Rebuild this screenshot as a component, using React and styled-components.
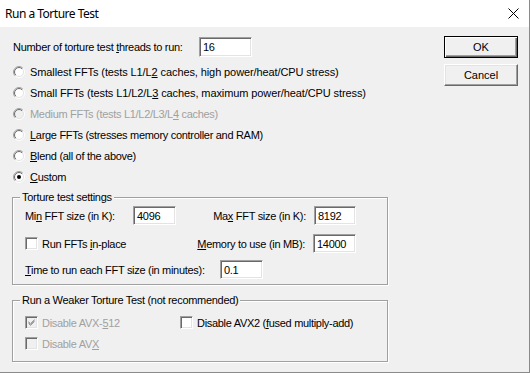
import React from 'react';
import styled, { createGlobalStyle } from 'styled-components';

const Global = createGlobalStyle`
  html, body { margin: 0; padding: 0; background: #f0f0f0; }
  body { font-family: "Liberation Sans", Arial, sans-serif; }
`;

const Window = styled.div`
  position: relative;
  width: 530px;
  height: 373px;
  box-sizing: border-box;
  background: #f0f0f0;
  border-right: 1px solid #8a8a8a;
  border-bottom: 1px solid #8a8a8a;
  display: flex;
  flex-direction: column;
  font-family: "Liberation Sans", Arial, sans-serif;
  font-size: 11px;
  letter-spacing: -0.3px;
  color: #000;
`;

const TitleBar = styled.div`
  height: 27px;
  flex: none;
  background: #fff;
  display: flex;
  align-items: center;
  justify-content: space-between;
  padding: 0 10px 0 5px;
`;

const Title = styled.span`
  font-family: "Noto Sans", sans-serif;
  font-size: 12px;
  letter-spacing: -0.5px;
`;

const Body = styled.div`
  display: flex;
  flex: 1;
  padding: 9px 11px 0 12px;
`;

const Main = styled.div`
  width: 376px;
  display: flex;
  flex-direction: column;
`;

const Side = styled.div`
  margin-left: auto;
  width: 74px;
  display: flex;
  flex-direction: column;
  gap: 6px;
`;

const Button = styled.button`
  height: 22px;
  box-sizing: border-box;
  background: #f0f0f0;
  font: inherit;
  color: #000;
  padding: 0;
  border: 1px solid;
  border-color: ${p => (p.$default ? '#000' : '#fff #696969 #696969 #fff')};
  box-shadow: ${p =>
    p.$default
      ? 'inset 1px 1px 0 #fff, inset -1px -1px 0 #696969, inset -2px -2px 0 #a0a0a0'
      : 'inset -1px -1px 0 #a0a0a0, inset 1px 1px 0 #e3e3e3'};
`;

const ThreadsRow = styled.div`
  display: flex;
  align-items: center;
  height: 20px;
  margin-top: 1px;
  padding-left: 1px;
`;

const Label = styled.span`
  width: ${p => (p.$w ? `${p.$w}px` : 'auto')};
  text-align: ${p => (p.$right ? 'right' : 'left')};
  white-space: nowrap;
  color: ${p => (p.$disabled ? '#a0a0a0' : '#000')};
  letter-spacing: ${p => (p.$wide ? '-0.1px' : 'inherit')};
  flex: none;
`;

const Key = styled.span`
  text-decoration: underline;
`;

const Field = styled.div`
  width: ${p => p.$w}px;
  height: ${p => p.$h || 19}px;
  box-sizing: border-box;
  background: #fff;
  border: 1px solid;
  border-color: #a0a0a0 #fff #fff #a0a0a0;
  box-shadow: inset 1px 1px 0 #696969, inset -1px -1px 0 #e3e3e3;
  display: flex;
  align-items: center;
  padding-left: 3px;
  flex: none;
`;

const RadioList = styled.div`
  display: flex;
  flex-direction: column;
  margin-top: 4px;
`;

const RadioRow = styled.div`
  display: flex;
  align-items: center;
  height: 21px;
  padding-left: 1px;
  gap: 5px;
`;

const Group = styled.div`
  position: relative;
  box-sizing: border-box;
  height: ${p => p.$h}px;
  margin-top: ${p => p.$mt}px;
  border: 1px solid #a0a0a0;
  box-shadow: inset 1px 1px 0 #fff, 1px 1px 0 #fff;
  padding: ${p => p.$pt}px 31px 0 12px;
  display: flex;
  flex-direction: column;
`;

const Legend = styled.span`
  position: absolute;
  top: -7px;
  left: 7px;
  padding: 0 2px;
  line-height: 13px;
  background: #f0f0f0;
`;

const SettingRow = styled.div`
  display: flex;
  align-items: center;
  height: 19px;
  margin-top: ${p => p.$mt || 0}px;
`;

const Right = styled.div`
  margin-left: auto;
  display: flex;
  align-items: center;
  gap: 8px;
`;

const CheckRow = styled.div`
  display: flex;
  align-items: center;
  height: 21px;
`;

const CheckItem = styled.label`
  display: flex;
  align-items: center;
  gap: 4px;
  width: ${p => (p.$w ? `${p.$w}px` : 'auto')};
  flex: none;
`;

const Box = styled.span`
  width: 13px;
  height: 13px;
  box-sizing: border-box;
  flex: none;
  background: ${p => (p.$disabled ? '#f0f0f0' : '#fff')};
  border: 1px solid;
  border-color: #a0a0a0 #fff #fff #a0a0a0;
  box-shadow: inset 1px 1px 0 #696969, inset -1px -1px 0 #e3e3e3;
  display: flex;
  align-items: center;
  justify-content: center;
`;

const Radio = ({ checked, disabled }) => (
  <svg width="12" height="12" viewBox="0 0 12 12" style={{ flex: 'none' }}>
    <defs>
      <linearGradient id="ro" x1="0" y1="0" x2="1" y2="1">
        <stop offset="0.45" stopColor="#a0a0a0" />
        <stop offset="0.55" stopColor="#ffffff" />
      </linearGradient>
      <linearGradient id="ri" x1="0" y1="0" x2="1" y2="1">
        <stop offset="0.45" stopColor="#696969" />
        <stop offset="0.55" stopColor="#e3e3e3" />
      </linearGradient>
    </defs>
    <circle cx="6" cy="6" r="5.5" fill="none" stroke="url(#ro)" strokeWidth="1" />
    <circle cx="6" cy="6" r="4.5" fill={disabled ? '#f0f0f0' : '#fff'} stroke="url(#ri)" strokeWidth="1" />
    {checked && <circle cx="6" cy="6" r="2" fill="#000" />}
  </svg>
);

const Check = ({ color }) => (
  <svg width="7" height="7" viewBox="0 0 7 7">
    <path d="M0.5 2.5 L2.5 4.5 L6.5 0.5 M0.5 3.5 L2.5 5.5 L6.5 1.5 M0.5 4.5 L2.5 6.5 L6.5 2.5" stroke={color} strokeWidth="1" fill="none" />
  </svg>
);

const Close = () => (
  <svg width="11" height="11" viewBox="0 0 11 11">
    <path d="M0.5 0.5 L10.5 10.5 M10.5 0.5 L0.5 10.5" stroke="#000" strokeWidth="1" />
  </svg>
);

const radios = [
  { k: 'r1', wide: true, content: <>Smallest FFTs (tests L1/L<Key>2</Key> caches, high power/heat/CPU stress)</> },
  { k: 'r2', wide: true, content: <>Small FFTs (tests L1/L2/L<Key>3</Key> caches, maximum power/heat/CPU stress)</> },
  { k: 'r3', disabled: true, content: <>Medium FFTs (tests L1/L2/L3/L<Key>4</Key> caches)</> },
  { k: 'r4', content: <><Key>L</Key>arge FFTs (stresses memory controller and RAM)</> },
  { k: 'r5', content: <><Key>B</Key>lend (all of the above)</> },
  { k: 'r6', checked: true, content: <><Key>C</Key>ustom</> },
];

export default function App() {
  return (
    <>
      <Global />
      <Window>
        <TitleBar>
          <Title>Run a Torture Test</Title>
          <Close />
        </TitleBar>
        <Body>
          <Main>
            <ThreadsRow>
              <Label $w={186}>Number of torture test <Key>t</Key>hreads to run:</Label>
              <Field $w={53} $h={20}>16</Field>
            </ThreadsRow>
            <RadioList>
              {radios.map(r => (
                <RadioRow key={r.k}>
                  <Radio checked={r.checked} disabled={r.disabled} />
                  <Label $disabled={r.disabled} $wide={r.wide}>{r.content}</Label>
                </RadioRow>
              ))}
            </RadioList>
            <Group $h={88} $mt={10} $pt={8}>
              <Legend>Torture test settings</Legend>
              <SettingRow>
                <Label $w={108}>Mi<Key>n</Key> FFT size (in K):</Label>
                <Field $w={43}>4096</Field>
                <Right>
                  <Label>Ma<Key>x</Key> FFT size (in K):</Label>
                  <Field $w={42}>8192</Field>
                </Right>
              </SettingRow>
              <SettingRow $mt={9}>
                <CheckItem>
                  <Box />
                  <Label>Run FFTs <Key>i</Key>n-place</Label>
                </CheckItem>
                <Right>
                  <Label><Key>M</Key>emory to use (in MB):</Label>
                  <Field $w={43}>14000</Field>
                </Right>
              </SettingRow>
              <SettingRow $mt={7}>
                <Label $w={195}><Key>T</Key>ime to run each FFT size (in minutes):</Label>
                <Field $w={43}>0.1</Field>
              </SettingRow>
            </Group>
            <Group $h={62} $mt={15} $pt={11}>
              <Legend>Run a Weaker Torture Test (not recommended)</Legend>
              <CheckRow>
                <CheckItem $w={155}>
                  <Box $disabled><Check color="#a0a0a0" /></Box>
                  <Label $disabled>Disable AVX-<Key>5</Key>12</Label>
                </CheckItem>
                <CheckItem>
                  <Box />
                  <Label>Disable AVX2 (<Key>f</Key>used multiply-add)</Label>
                </CheckItem>
              </CheckRow>
              <CheckRow>
                <CheckItem>
                  <Box $disabled />
                  <Label $disabled>Disable AV<Key>X</Key></Label>
                </CheckItem>
              </CheckRow>
            </Group>
          </Main>
          <Side>
            <Button $default>OK</Button>
            <Button>Cancel</Button>
          </Side>
        </Body>
      </Window>
    </>
  );
}
